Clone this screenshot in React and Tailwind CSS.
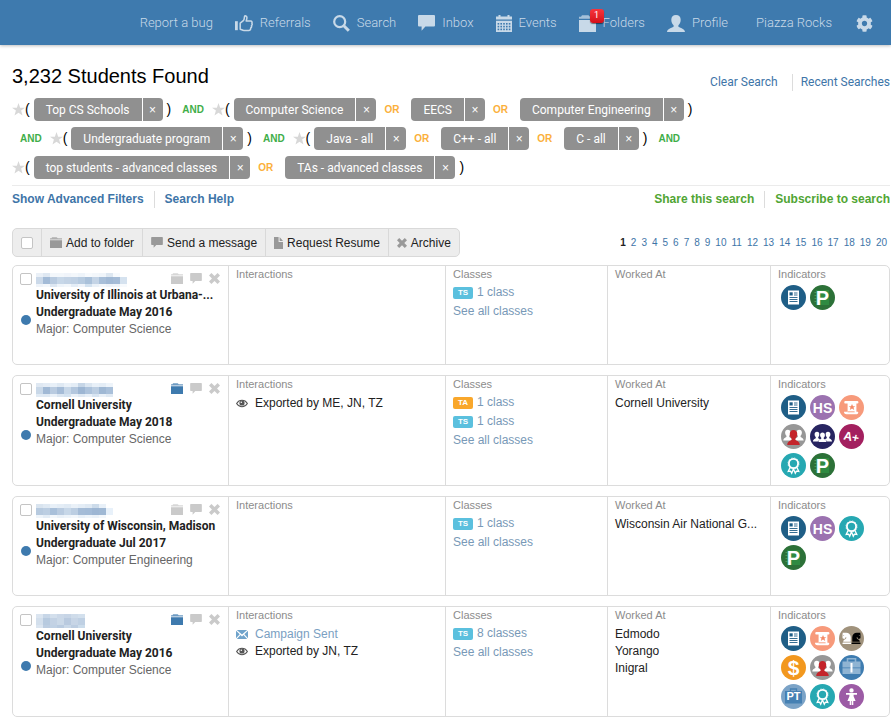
import React from "react";
import { FaChessKnight, FaCog } from "react-icons/fa";

/* ---------- small glyphs ---------- */

function FolderIcon({ className }) {
  return (
    <svg viewBox="0 0 17 17" preserveAspectRatio="none" className={className} fill="currentColor" aria-hidden="true">
      <path d="M3 0.300h6.500L11 1.800h6v2H0v-2h2z" opacity="0.75" />
      <path d="M0 5h17v12H0z" />
    </svg>
  );
}

function ChatIcon({ className }) {
  return (
    <svg viewBox="0 0 17 16" className={className} fill="currentColor" aria-hidden="true">
      <path d="M1 0h15a1 1 0 0 1 1 1v9.600a1 1 0 0 1-1 1H7.400L3.600 15.800v-4.200H1a1 1 0 0 1-1-1V1a1 1 0 0 1 1-1z" />
    </svg>
  );
}

function CrossIcon({ className }) {
  return (
    <svg viewBox="0 0 10 10" className={className} fill="currentColor" aria-hidden="true">
      <path d="M2.200 0 5 2.700 7.800 0 10 2.200 7.300 5 10 7.800 7.800 10 5 7.300 2.200 10 0 7.800 2.700 5 0 2.200z" />
    </svg>
  );
}

function PageIcon({ className }) {
  return (
    <svg viewBox="0 0 9 12" className={className} fill="currentColor" aria-hidden="true">
      <path d="M0 0h4.600v5H9v7H0z" />
      <path d="M5.600 0 9 4H5.600z" />
    </svg>
  );
}

function ThumbIcon({ className }) {
  return (
    <svg viewBox="0 0 18 17" className={className} aria-hidden="true">
      <path d="M0 6.200h2.800v9H0z" fill="currentColor" />
      <path
        d="M5.200 8.200 8.600 5.400c.8-1 .6-2.600 1-4.200.3-.7 2.200-.4 2.300 1.200.1 1.400-.5 2.600-.7 3.600h4.400c1.400 0 1.800 1.200 1.200 2.200.6.9.3 1.900-.3 2.400.3 1-.1 1.800-.7 2.200 0 1.800-.8 2.600-2 2.600H9c-1.700 0-2.400-1-3.800-1.200z"
        fill="none"
        stroke="currentColor"
        strokeWidth="1.500"
        strokeLinejoin="round"
      />
    </svg>
  );
}

function SearchIcon({ className }) {
  return (
    <svg viewBox="0 0 17 17" className={className} fill="none" stroke="currentColor" aria-hidden="true">
      <circle cx="6.700" cy="6.700" r="5.500" strokeWidth="2.200" />
      <path d="m10.800 10.800 5 5" strokeWidth="3" />
    </svg>
  );
}

function CalendarIcon({ className }) {
  const cols = [1.6, 4.4, 7.2, 10, 12.8];
  const rows = [8, 10.8, 13.6];
  return (
    <svg viewBox="0 0 16 17" className={className} fill="currentColor" aria-hidden="true">
      <path d="M0 1.500h16v3H0zM2.500 0h2v2h-2zM11.500 0h2v2h-2zM0 5.700h16V17H0z" />
      {rows.map((y) =>
        cols.map((x) => <rect key={`${x}-${y}`} x={x} y={y} width="1.600" height="1.600" fill="#3e7aae" />)
      )}
    </svg>
  );
}

function PersonIcon({ className }) {
  return (
    <svg viewBox="0 0 18 17" className={className} fill="currentColor" aria-hidden="true">
      <path d="M9 0c3 0 4.700 2 4.700 4.800 0 2.500-1 4.400-2.300 5.500v1.200c0 1.300 6.600 1.700 6.600 5.500H0c0-3.800 6.600-4.200 6.600-5.500v-1.200C5.300 9.200 4.300 7.300 4.300 4.800 4.300 2 6 0 9 0z" />
    </svg>
  );
}

function EyeIcon({ className }) {
  return (
    <svg viewBox="0 0 12 9" className={className} aria-hidden="true">
      <path d="M.6 4.500C3.200.2 8.800.2 11.400 4.500 8.800 8.800 3.200 8.800.6 4.500z" fill="none" stroke="currentColor" strokeWidth="1.100" />
      <circle cx="6" cy="4" r="2.600" fill="currentColor" />
      <circle cx="5.300" cy="3.200" r="0.800" fill="#fff" />
    </svg>
  );
}

function MailIcon({ className }) {
  return (
    <svg viewBox="0 0 12 9" className={className} fill="currentColor" aria-hidden="true">
      <path d="M.8 0h10.400L6 4.600zM0 .7 3.700 4.300 0 8.200zM12 .7v7.500L8.300 4.300zM.8 9l3.700-3.900L6 6.400l1.500-1.300L11.200 9z" />
    </svg>
  );
}

function StarIcon() {
  return (
    <svg viewBox="0 0 12 12" className="size-[13px] text-[#d8d8d8]" fill="currentColor" aria-hidden="true">
      <path d="M6 0l1.500 4.300H12L8.400 7l1.300 4.600L6 8.900l-3.700 2.700L3.600 7 0 4.300h4.500z" />
    </svg>
  );
}

/* ---------- indicator badges ---------- */

const Rosette = () => (
  <g fill="none" stroke="#fff">
    <circle cx="12.500" cy="10.500" r="4.600" strokeWidth="1.800" />
    <circle cx="12.500" cy="10.500" r="5.600" strokeWidth="0.600" strokeDasharray="1.600 1.300" />
    <path d="m9 14.600-1.800 3.800 2.400-.2 1.100 2 1.800-4.200 1.800 4.200 1.100-2 2.400.2-1.800-3.800" strokeWidth="1.300" />
  </g>
);

const Bust = ({ x, y, s, fill }) => (
  <path
    transform={`translate(${x} ${y}) scale(${s})`}
    fill={fill}
    d="M0-5c2 0 3 1.400 3 3.200C3-.2 2.300 1 1.500 1.800v.9C1.500 3.600 5 3.800 5 7H-5c0-3.200 3.500-3.400 3.500-4.300v-.9C-2.300 1-3-.2-3-1.800-3-3.600-2-5 0-5z"
  />
);

const badges = {
  resume: {
    label: "Resume",
    color: "#1f5e86",
    art: (
      <>
        <path d="M7 5.500h11v14H7z" fill="#fff" />
        <path d="M8.500 7.300h3.200v3.200H8.500z" fill="#1f5e86" />
        <path d="M13 8h3.500M13 10h3.500M8.500 12.500h8M8.500 14.500h8M8.500 16.500h8" stroke="#1f5e86" strokeWidth="0.900" />
      </>
    ),
  },
  piazza: {
    label: "Piazza",
    color: "#2c7138",
    art: (
      <>
        <path d="M6 5h13v15H6z" fill="#2f8a41" />
        <path d="M4.500 7.500h2M4.500 10.500h2M4.500 13.500h2M4.500 16.500h2" stroke="#4b9c58" />
      </>
    ),
    text: "P",
    textClass: "text-[20px]",
  },
  hs: { label: "High school", color: "#9b72b0", text: "HS", textClass: "text-[14px]" },
  diploma: {
    label: "Diploma",
    color: "#f79a7b",
    art: (
      <>
        <path d="M6 6h12.500c1.300 0 1.300 2.600 0 2.600H17.400v8.200h1.400c.8 0 .6 2.400-.9 2.400H7.500c-2 0-2.500-1-2.500-2.400h3.600V8.600H6C5 8.600 5 6 6 6z" fill="#fff" />
        <path d="M8.600 16.800h7" stroke="#f79a7b" strokeWidth="0.900" />
        <path d="m13 9 1 2.200h2.300l-1.800 1.400.7 2.300-2.200-1.400-2.200 1.400.7-2.300-1.800-1.400H12z" fill="#f58a67" />
      </>
    ),
  },
  leader: {
    label: "Leader",
    color: "#979797",
    art: (
      <>
        <Bust x={6.8} y={10.2} s={0.9} fill="#fff" />
        <Bust x={18.2} y={10.2} s={0.9} fill="#fff" />
        <Bust x={12.5} y={12.2} s={1.25} fill="#c4242b" />
      </>
    ),
  },
  group: {
    label: "Group",
    color: "#282561",
    art: (
      <>
        <Bust x={7} y={11.8} s={0.8} fill="#fff" />
        <Bust x={18} y={11.8} s={0.8} fill="#fff" />
        <Bust x={12.5} y={12.2} s={0.95} fill="#282561" />
        <Bust x={12.5} y={12.4} s={0.8} fill="#fff" />
      </>
    ),
  },
  grade: { label: "Top grades", color: "#a3205f", text: "A+", textClass: "text-[12px] rotate-12" },
  award: { label: "Award", color: "#26a8b2", art: <Rosette /> },
  strategy: {
    label: "Strategy",
    color: "#a0927c",
    art: (
      <>
        <g transform="translate(2 6)">
          <FaChessKnight size={12} color="#fff" />
        </g>
        <g transform="translate(23 6) scale(-1 1)">
          <FaChessKnight size={12} color="#000" />
        </g>
      </>
    ),
  },
  money: { label: "Finance", color: "#f2981f", text: "$", textClass: "text-[21px]" },
  work: {
    label: "Work experience",
    color: "#3e7cb0",
    art: (
      <>
        <path d="M8.500 7V3.800h8V7" fill="none" stroke="#8fb4d3" strokeWidth="1.600" />
        <path d="M3.500 6.500h18v6h-18zM3.500 13.300h18V19h-18z" fill="#8fb4d3" />
        <path d="M11.500 8h2v9.500h-2z" fill="#fff" />
      </>
    ),
  },
  partTime: {
    label: "Part time",
    color: "#7ba3c7",
    art: (
      <>
        <path d="M9.500 7V5h6v2" fill="none" stroke="#4580b3" strokeWidth="1.300" />
        <path d="M4 7h17v12.500H4z" fill="#4580b3" />
      </>
    ),
    text: "PT",
    textClass: "text-[11px]",
  },
  woman: {
    label: "Women in tech",
    color: "#9c5ba5",
    art: (
      <path
        fill="#fff"
        d="M12.500 4.200a2.200 2.200 0 1 1 0 4.400 2.200 2.200 0 0 1 0-4.400zM7 9h11v1.700h-3.400v1.500l2 4.800h-2.300v4h-1.500v-4h-.6v4h-1.500v-4H8.400l2-4.800v-1.500H7z"
      />
    ),
  },
};

function Badge({ kind }) {
  const b = badges[kind];
  return (
    <li className="relative size-[25px]" title={b.label}>
      <svg viewBox="0 0 25 25" className="size-full" aria-hidden="true">
        <circle cx="12.500" cy="12.500" r="12.500" fill={b.color} />
        {b.art}
      </svg>
      {b.text && (
        <span className={`absolute inset-0 flex items-center justify-center leading-none font-bold text-white ${b.textClass}`}>
          {b.text}
        </span>
      )}
    </li>
  );
}

/* ---------- header ---------- */

function NavItem({ icon, children }) {
  return (
    <a href="#" className="flex items-center gap-[7px]">
      {icon}
      <span>{children}</span>
    </a>
  );
}

function Header() {
  return (
    <header className="flex h-[45px] items-center justify-end gap-[22px] bg-[#3e7aae] pt-px pr-[18px] font-['Roboto',sans-serif] text-[13px] font-light text-[#c8d9e8] shadow-[0_1px_3px_rgba(0,0,0,0.25)]">
      <NavItem>Report a bug</NavItem>
      <NavItem icon={<ThumbIcon className="h-[17px] w-[18px]" />}>Referrals</NavItem>
      <NavItem icon={<SearchIcon className="size-[17px]" />}>Search</NavItem>
      <NavItem icon={<ChatIcon className="h-4 w-[17px]" />}>Inbox</NavItem>
      <NavItem icon={<CalendarIcon className="h-[17px] w-4" />}>Events</NavItem>
      <NavItem
        icon={
          <span className="relative">
            <FolderIcon className="size-[17px]" />
            <span className="absolute -top-[6px] left-[11px] flex size-[14px] items-center justify-center rounded-[3px] bg-linear-to-b from-[#f8343c] to-[#d40c18] text-[9px] font-normal text-white shadow-[0_1px_1px_rgba(0,0,0,0.5)]">
              1
            </span>
          </span>
        }
      >
        Folders
      </NavItem>
      <NavItem icon={<PersonIcon className="h-[17px] w-[18px]" />}>Profile</NavItem>
      <a href="#" className="mr-0.5 ml-1.5">Piazza Rocks</a>
      <button type="button" aria-label="Settings">
        <FaCog className="size-[17px]" />
      </button>
    </header>
  );
}

/* ---------- search filters ---------- */

const filterLines = [
  ["*(", "Top CS Schools", ")", "AND", "*(", "Computer Science", "OR", "EECS", "OR", "Computer Engineering", ")"],
  ["AND", "*(", "Undergraduate program", ")", "AND", "*(", "Java - all", "OR", "C++ - all", "OR", "C - all", ")", "AND"],
  ["*(", "top students - advanced classes", "OR", "TAs - advanced classes", ")"],
];

function FilterToken({ token }) {
  if (token === "*(")
    return (
      <span className="mr-1 flex items-center text-[14px] text-black">
        <StarIcon />(
      </span>
    );
  if (token === ")") return <span className="mr-[3px] ml-1 text-[14px] text-black">)</span>;
  if (token === "AND") return <span className="mx-2 text-[10px] font-bold text-[#3fae49]">AND</span>;
  if (token === "OR") return <span className="mr-3 ml-2 text-[10px] font-bold text-[#fbb03b]">OR</span>;
  return (
    <span className="flex h-[23px] gap-px overflow-hidden rounded-[4px] text-[12px] text-white">
      <span className="flex items-center bg-[#909090] px-3 font-['Roboto',sans-serif]">{token}</span>
      <button type="button" aria-label={`Remove ${token}`} className="w-5 bg-[#909090]">
        ×
      </button>
    </span>
  );
}

/* ---------- student cards ---------- */

function Mosaic({ rows }) {
  const [top, mid, low] = rows;
  return (
    <svg viewBox="0 0 112 14" className="h-[14px] w-28" role="img" aria-label="Hidden name">
      {top.map((c, i) => <rect key={`t${i}`} x={i * 7} y="0" width="7" height="4" fill={c} />)}
      {mid.map((c, i) => <rect key={`m${i}`} x={i * 7} y="4" width="7" height="7" fill={c} />)}
      {low.map((c, i) => <rect key={`l${i}`} x={i * 7} y="11" width="7" height="3" fill={c} />)}
    </svg>
  );
}

const students = [
  {
    school: "University of Illinois at Urbana-...",
    level: "Undergraduate May 2016",
    major: "Computer Science",
    mosaic: [
      ["#eaf0f7", "#dfe8f2", "#f3f7fb", "#f3f7fb", "#f0f4fa", "#f3f7fb", "#eef4fa", "#f7fafd", "#f3f7fb", "#f0f5fa", "#dde7f1", "#f7fafd"],
      ["#cbd9e9", "#a3bbd7", "#b9cbe0", "#c7d7e8", "#c3d3e5", "#c0d1e4", "#b7cbe0", "#aac1da", "#c4d4e6", "#a8bfd9", "#a1b9d5", "#a5bcd7", "#d5e2ef"],
      ["#eef3f9", "#f3f7fb", "#dde7f2", "#eef4fa", "#f3f7fb", "#e4edf6", "#f0f4fa", "#d3e2f0", "#eaf1f8", "#f3f7fb", "#eef3f9", "#f0f5fa", "#f7fafd"],
    ],
    filed: false,
    interactions: [],
    classes: [["TS", "1 class"]],
    worked: [],
    indicators: ["resume", "piazza"],
  },
  {
    school: "Cornell University",
    level: "Undergraduate May 2018",
    major: "Computer Science",
    mosaic: [
      ["#dfe8f2", "#e4ecf5", "#e8f0f8", "#dfe9f3", "#eaf1f8", "#e4edf6", "#c6d6e7", "#dbe6f1", "#e8f0f8", "#e4edf6", "#eef4fa"],
      ["#c9d8e8", "#a1b9d5", "#b9cbe0", "#a5bcd7", "#c7d7e8", "#b3c7de", "#9db6d3", "#adc3dc", "#bccee2", "#9fb8d4", "#a9c0da"],
      ["#e0eaf4", "#dfe9f3", "#eaf1f8", "#dbe6f1", "#d3e2f0", "#eaf1f8", "#dfe9f3", "#e8f0f8", "#d7e4f1", "#eaf1f8", "#dfe9f3"],
    ],
    filed: true,
    interactions: [["eye", "Exported by ME, JN, TZ"]],
    classes: [["TA", "1 class"], ["TS", "1 class"]],
    worked: ["Cornell University"],
    indicators: ["resume", "hs", "diploma", "leader", "group", "grade", "award", "piazza"],
  },
  {
    school: "University of Wisconsin, Madison",
    level: "Undergraduate Jul 2017",
    major: "Computer Engineering",
    mosaic: [
      ["#d9e4ef", "#dfe9f3", "#e8f0f8", "#e4edf6", "#e0eaf4", "#eaf1f8", "#e4edf6", "#dfe9f3", "#ccdbea", "#e8f0f8"],
      ["#b7cadf", "#bccee2", "#a9c0da", "#b9cbe0", "#c7d7e8", "#bccee2", "#a5bcd7", "#a3bbd7", "#9db6d3", "#9fb8d4", "#e8f1fa"],
      ["#eef4fa", "#e4edf6", "#f3f7fb", "#eaf1f8", "#eef4fa", "#f3f7fb", "#e8f0f8", "#eef4fa", "#eaf1f8", "#f3f7fb"],
    ],
    filed: false,
    interactions: [],
    classes: [["TS", "1 class"]],
    worked: ["Wisconsin Air National G..."],
    indicators: ["resume", "hs", "award", "piazza"],
  },
  {
    school: "Cornell University",
    level: "Undergraduate May 2016",
    major: "Computer Science",
    mosaic: [
      ["#dbe5f0", "#c7d6e7", "#d3dfec", "#cbd8e8", "#c7d5e6", "#cfdcea", "#d3e0ed"],
      ["#d3dfec", "#b7cadf", "#c3d2e4", "#cbd9e8", "#b9cadf", "#c7d5e6", "#bfd0e3"],
      ["#dbe5f0", "#bccde1", "#c0d1e4", "#b9cbe0", "#c9d8e8", "#bccde1", "#cbdceb"],
    ],
    filed: true,
    interactions: [["mail", "Campaign Sent"], ["eye", "Exported by JN, TZ"]],
    classes: [["TS", "8 classes"]],
    worked: ["Edmodo", "Yorango", "Inigral"],
    indicators: ["resume", "diploma", "strategy", "money", "leader", "work", "partTime", "award", "woman"],
  },
];

function Column({ title, children }) {
  return (
    <section className="min-w-0 border-l border-[#dcdcdc] pt-[2px] pb-[7px] pl-[7px]">
      <h3 className="text-[11px] leading-3 text-[#8c8c8c]">{title}</h3>
      {children}
    </section>
  );
}

function StudentCard({ s }) {
  return (
    <li className="grid min-h-[100px] grid-cols-[215fr_217fr_162fr_163fr_119fr] rounded-[5px] border border-[#dcdcdc]">
      <div className="flex min-w-0 gap-1 pt-[7px] pl-[7px]">
        <div className="flex w-3 flex-col items-center">
          <input
            type="checkbox"
            aria-label={`Select ${s.school} student`}
            className="size-3 shrink-0 appearance-none rounded-[2px] border border-[#c4c4c4] bg-white"
          />
          <span className="flex flex-1 items-center pb-[10px]">
            <span className="size-[10px] rounded-full bg-[#3e7aae]" />
          </span>
        </div>
        <div className="min-w-0 flex-1 pr-2">
          <div className="flex h-[14px] items-start justify-between">
            <Mosaic rows={s.mosaic} />
            <div className="flex items-center gap-[7px] text-[#cacaca]">
              <button type="button" aria-label="Add to folder" className={s.filed ? "text-[#3e7aae]" : ""}>
                <FolderIcon className="h-[11px] w-3" />
              </button>
              <button type="button" aria-label="Send a message">
                <ChatIcon className="h-[11px] w-3" />
              </button>
              <button type="button" aria-label="Archive">
                <CrossIcon className="size-[11px]" />
              </button>
            </div>
          </div>
          <p className="font-['Roboto',sans-serif] leading-[17px] font-bold whitespace-nowrap">{s.school}</p>
          <p className="font-['Roboto',sans-serif] leading-[17px] font-bold whitespace-nowrap">{s.level}</p>
          <p className="leading-4 text-[#666]">Major: {s.major}</p>
        </div>
      </div>
      <Column title="Interactions">
        <ul className="mt-[5px] leading-[17px]">
          {s.interactions.map(([kind, text]) => (
            <li key={text} className="flex items-center gap-[7px]">
              {kind === "eye" ? (
                <EyeIcon className="h-[9px] w-3 text-[#555]" />
              ) : (
                <MailIcon className="h-[9px] w-3 text-[#6fa3cb]" />
              )}
              {kind === "eye" ? <span>{text}</span> : <a href="#" className="text-[#7aa0c2]">{text}</a>}
            </li>
          ))}
        </ul>
      </Column>
      <Column title="Classes">
        <ul className="mt-[3px] leading-[19px] text-[#7899b7]">
          {s.classes.map(([tag, text]) => (
            <li key={tag} className="flex items-center gap-1">
              <span
                className={`flex h-3 w-5 items-center justify-center rounded-[2px] text-[8px] font-bold text-white ${
                  tag === "TA" ? "bg-[#f9a72b]" : "bg-[#5bc0de]"
                }`}
              >
                {tag}
              </span>
              <a href="#">{text}</a>
            </li>
          ))}
          <li>
            <a href="#">See all classes</a>
          </li>
        </ul>
      </Column>
      <Column title="Worked At">
        <ul className="mt-[5px] leading-[17px] whitespace-nowrap">
          {s.worked.map((w) => (
            <li key={w}>{w}</li>
          ))}
        </ul>
      </Column>
      <Column title="Indicators">
        <ul className="mt-[5px] ml-[3px] flex w-[83px] flex-wrap gap-1">
          {s.indicators.map((k) => (
            <Badge key={k} kind={k} />
          ))}
        </ul>
      </Column>
    </li>
  );
}

/* ---------- page ---------- */

const actions = [
  [<FolderIcon className="h-[11px] w-3" />, "Add to folder"],
  [<ChatIcon className="h-[11px] w-3" />, "Send a message"],
  [<PageIcon className="h-3 w-[9px]" />, "Request Resume"],
  [<CrossIcon className="size-[10px]" />, "Archive"],
];

export default function App() {
  return (
    <div className="bg-white font-['Liberation_Sans',Arial,sans-serif] text-[12px] text-[#222]">
      <Header />
      <main className="pr-px pl-3">
        <div className="flex items-start justify-between pt-[19px]">
          <h1 className="text-[20px] leading-6 text-black">3,232 Students Found</h1>
          <div className="mt-[10px] flex items-center font-['Roboto',sans-serif] leading-[17px] text-[#3e75a8]">
            <a href="#" className="border-r border-[#dcdcdc] pr-[14px]">Clear Search</a>
            <a href="#" className="pl-2">Recent Searches</a>
          </div>
        </div>

        <div className="mt-[7px] flex flex-col gap-[6px] border-b border-[#ebebeb] pb-[6px]">
          {filterLines.map((line, i) => (
            <div key={i} className="flex items-center">
              {line.map((t, j) => (
                <FilterToken key={j} token={t} />
              ))}
            </div>
          ))}
        </div>

        <div className="mt-[5px] flex justify-between leading-[17px] font-bold">
          <div className="flex text-[#3e75a8]">
            <a href="#" className="border-r border-[#dcdcdc] pr-[10px]">Show Advanced Filters</a>
            <a href="#" className="pl-[10px]">Search Help</a>
          </div>
          <div className="flex text-[#50a533]">
            <a href="#" className="border-r border-[#dcdcdc] pr-[10px]">Share this search</a>
            <a href="#" className="pl-[10px]">Subscribe to search</a>
          </div>
        </div>

        <div className="mt-5 flex items-center justify-between">
          <div className="flex h-[29px] items-stretch divide-x divide-[#d9d9d9] rounded-[5px] border border-[#d9d9d9] bg-[#ededed]">
            <label className="flex items-center px-2">
              <input
                type="checkbox"
                aria-label="Select all"
                className="size-3 appearance-none rounded-[2px] border border-[#c4c4c4] bg-white"
              />
            </label>
            {actions.map(([icon, label]) => (
              <button key={label} type="button" className="flex items-center gap-1 px-2">
                <span className="text-[#999]">{icon}</span>
                {label}
              </button>
            ))}
          </div>
          <nav aria-label="Pages" className="flex gap-[5px] pr-[3px] text-[10px] text-[#3e75a8]">
            <strong className="text-[#222]">1</strong>
            {Array.from({ length: 19 }, (_, i) => (
              <a key={i} href="#">
                {i + 2}
              </a>
            ))}
          </nav>
        </div>

        <ul className="mt-2 flex flex-col gap-[10px]">
          {students.map((s, i) => (
            <StudentCard key={i} s={s} />
          ))}
        </ul>
      </main>
    </div>
  );
}
